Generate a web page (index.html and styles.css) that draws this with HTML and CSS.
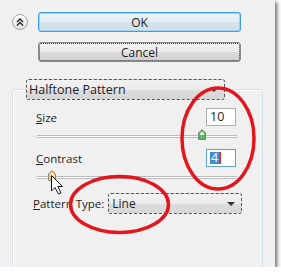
FILE: index.html
```html
<!DOCTYPE html>
<html lang="en">
<head>
    <meta charset="UTF-8">
    <title>Halftone Pattern</title>
    <link rel="stylesheet" href="styles.css">
</head>
<body>
    <div class="dialog">
        <div class="top-row">
            <button class="collapse">
                <svg width="10" height="10" viewBox="0 0 10 10">
                    <path d="M2 5 L5 2 L8 5 M2 8.5 L5 5.5 L8 8.5" fill="none" stroke="#2b2b2b" stroke-width="1.5"/>
                </svg>
            </button>
            <button class="btn btn-default">OK</button>
        </div>
        <div class="cancel-row">
            <button class="btn btn-focus">Cancel</button>
        </div>

        <fieldset class="group">
            <legend class="combo combo-head">Halftone Pattern<span class="arrow"></span></legend>
            <div class="group-body">
                <div class="field-row">
                    <span class="label"><u>S</u>ize</span>
                    <span class="num">10</span>
                </div>
                <div class="slider">
                    <div class="track"></div>
                    <svg class="thumb" style="left: 162px" width="8" height="11" viewBox="0 0 8 11">
                        <path d="M0.5 4 L4 0.5 L7.5 4 L7.5 10.5 L0.5 10.5 Z" fill="#5cb85f" stroke="#6f8a72"/>
                        <path d="M2 4.5 L4 2.5 L6 4.5 L6 6 L2 6 Z" fill="#e9f6ea"/>
                    </svg>
                </div>
                <div class="field-row second">
                    <span class="label"><u>C</u>ontrast</span>
                    <span class="num num-focus"><span class="sel">4</span></span>
                </div>
                <div class="slider">
                    <div class="track"></div>
                    <svg class="thumb" style="left: 12px" width="8" height="11" viewBox="0 0 8 11">
                        <path d="M0.5 4 L4 0.5 L7.5 4 L7.5 10.5 L0.5 10.5 Z" fill="#f3c46a" stroke="#8d8a84"/>
                        <path d="M2 4.5 L4 2.5 L6 4.5 L6 6 L2 6 Z" fill="#fdf1d6"/>
                    </svg>
                </div>
                <div class="type-row">
                    <span class="label"><u>P</u>attern Type:</span>
                    <div class="combo combo-type">Line<span class="arrow"></span></div>
                </div>
            </div>
        </fieldset>

        <!-- marcas vermelhas e cursor por cima -->
        <svg class="marks" width="281" height="275" viewBox="0 0 281 275">
            <ellipse cx="218" cy="138.5" rx="36" ry="50.5" fill="none" stroke="#e3161d" stroke-width="3.5"/>
            <ellipse cx="119.5" cy="204.5" rx="49" ry="28" fill="none" stroke="#e3161d" stroke-width="3.5"/>
            <path d="M51.5 175.5 L51.5 191 L55 187.5 L58.5 194 L61 193 L57.8 186.5 L62.5 186.5 Z" fill="#fff" stroke="#111" stroke-width="1" stroke-linejoin="miter"/>
        </svg>
    </div>
</body>
</html>
```

FILE: styles.css
```css
body {
    margin: 0;
    background: #ffffff;
    font-family: 'Open Sans', 'Noto Sans', sans-serif;
    font-size: 12px;
    color: #1e1e1e;
}

.dialog {
    position: relative;
    width: 275px;
    height: 267px;
    background: #f0f0f0;
    box-shadow: 2px 2px 4px rgba(0, 0, 0, 0.6);
    overflow: hidden;
}

.top-row {
    display: flex;
    align-items: center;
    gap: 10px;
    padding: 12px 0 0 12px;
}

.collapse {
    width: 16px;
    height: 16px;
    padding: 0;
    border: 1px solid #a4a4a4;
    border-radius: 50%;
    background: linear-gradient(#ffffff, #e2e2e2);
    display: flex;
    align-items: center;
    justify-content: center;
}

.btn {
    width: 203px;
    height: 20px;
    padding: 0;
    font-family: inherit;
    font-size: 12px;
    color: #1e1e1e;
    border-radius: 3px;
}
.btn-default {
    border: 1px solid #3c9ee6;
    background: linear-gradient(#eaf3f8 0%, #e2ecf2 50%, #d3e2eb 51%, #cfdfe9 100%);
    box-shadow: inset 0 0 0 1px #9fd3f5;
}
.btn-focus {
    border: 1px solid #8a8a8a;
    background: linear-gradient(#f2f2f2 0%, #ebebeb 50%, #dddddd 51%, #cfcfcf 100%);
    outline: 1px dotted #333;
    outline-offset: -2px;
}

.cancel-row {
    padding: 10px 0 0 38px;
}

.group {
    margin: 17px 0 0 12px;
    padding: 0 0 0 13px;
    width: 251px;
    height: 220px;
    box-sizing: border-box;
    border: 1px solid #d5dfe5;
    box-shadow: inset 1px 1px 0 #ffffff;
    border-radius: 2px;
}

.combo {
    position: relative;
    box-sizing: border-box;
    height: 21px;
    line-height: 19px;
    padding: 0 0 0 3px;
    border: 1px dashed #555;
    border-radius: 3px;
    background: linear-gradient(#f2f2f2 0%, #ebebeb 50%, #dddddd 51%, #d6d6d6 100%);
    font-size: 12px;
}
.combo .arrow {
    position: absolute;
    right: 6px;
    top: 8px;
    border-left: 4px solid transparent;
    border-right: 4px solid transparent;
    border-top: 4px solid #333;
}
.combo-head {
    width: 199px;
    padding: 0 0 0 2px;
    margin: 0;
    font-size: 12.5px;
}

.group-body {
    padding: 8px 24px 0 10px;
}

.field-row {
    display: flex;
    justify-content: space-between;
    align-items: center;
    height: 18px;
    padding-right: 2px;
}
.field-row.second {
    margin-top: 9px;
}
.label {
    font-size: 11.5px;
}

.num {
    box-sizing: border-box;
    width: 30px;
    height: 18px;
    padding-left: 3px;
    line-height: 16px;
    border: 1px solid #abadb3;
    background: #ffffff;
    font-size: 12.5px;
}
.num-focus {
    border-color: #5fa2d9;
}
.num-focus .sel {
    display: inline-block;
    height: 12px;
    line-height: 12px;
    margin-top: 1px;
    padding: 0 1px;
    background: #3e8fd6;
    color: #ffffff;
    border-right: 2px solid #e63434;
}

.slider {
    position: relative;
    height: 10px;
    margin-top: 4px;
}
.track {
    position: absolute;
    left: 0;
    right: 0;
    top: 5px;
    height: 1px;
    border: 1px solid #b9bcbf;
    background: #ffffff;
    border-radius: 2px;
}
.thumb {
    position: absolute;
    top: -1px;
}
.slider + .field-row {
    margin-top: 9px;
}

.type-row {
    display: flex;
    align-items: center;
    gap: 4px;
    margin: 12px -4px 0 -3px;
}
.combo-type {
    flex: 1;
    padding-left: 3px;
}

.marks {
    position: absolute;
    top: 0;
    left: 0;
    pointer-events: none;
}
```
